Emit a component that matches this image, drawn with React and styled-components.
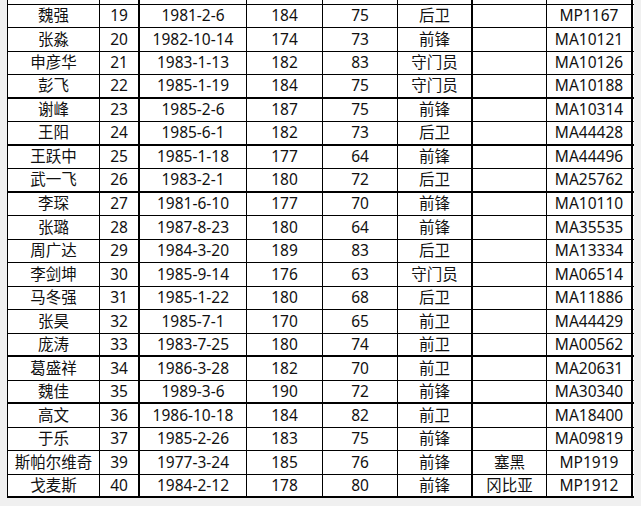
import React from "react";
import styled, { createGlobalStyle } from "styled-components";

const GlobalStyle = createGlobalStyle`
  html, body {
    margin: 0;
    padding: 0;
    background: #f0f0f0;
    overflow: hidden;
  }
`;

const COLS = [92, 40, 107, 76, 75, 75, 74, 86];
const THICK_COLS = [1, 5, 7];

const Viewport = styled.div`
  width: 641px;
  height: 506px;
  overflow: hidden;
  background: #f0f0f0;
`;

const Sheet = styled.div`
  margin: -19px 0 0 7px;
  width: 626px;
  border-left: 1px solid #000;
  background: #fff;
  font-family: "Noto Sans", "Noto Sans CJK SC", sans-serif;
  font-size: 15.5px;
  color: #111;
`;

const Row = styled.div`
  display: grid;
  grid-template-columns: ${COLS.map((w) => `${w}px`).join(" ")};
  height: ${(p) => p.$h}px;
  box-sizing: border-box;
  border-bottom: ${(p) => (p.$thick ? 2 : 1)}px solid #000;
`;

const Cell = styled.div`
  box-sizing: border-box;
  display: flex;
  align-items: center;
  justify-content: center;
  white-space: nowrap;
  border-right: ${(p) => (p.$thick ? 2 : 1)}px solid #000;
  line-height: 1;
`;

const rows = [
  ["孙祥", "", "", "", "", "", "", ""],
  ["魏强", "19", "1981-2-6", "184", "75", "后卫", "", "MP1167"],
  ["张淼", "20", "1982-10-14", "174", "73", "前锋", "", "MA10121"],
  ["申彦华", "21", "1983-1-13", "182", "83", "守门员", "", "MA10126"],
  ["彭飞", "22", "1985-1-19", "184", "75", "守门员", "", "MA10188"],
  ["谢峰", "23", "1985-2-6", "187", "75", "前锋", "", "MA10314"],
  ["王阳", "24", "1985-6-1", "182", "73", "后卫", "", "MA44428"],
  ["王跃中", "25", "1985-1-18", "177", "64", "前锋", "", "MA44496"],
  ["武一飞", "26", "1983-2-1", "180", "72", "后卫", "", "MA25762"],
  ["李琛", "27", "1981-6-10", "177", "70", "前锋", "", "MA10110"],
  ["张璐", "28", "1987-8-23", "180", "64", "前锋", "", "MA35535"],
  ["周广达", "29", "1984-3-20", "189", "83", "后卫", "", "MA13334"],
  ["李剑坤", "30", "1985-9-14", "176", "63", "守门员", "", "MA06514"],
  ["马冬强", "31", "1985-1-22", "180", "68", "后卫", "", "MA11886"],
  ["张昊", "32", "1985-7-1", "170", "65", "前卫", "", "MA44429"],
  ["庞涛", "33", "1983-7-25", "180", "74", "前卫", "", "MA00562"],
  ["葛盛祥", "34", "1986-3-28", "182", "70", "前卫", "", "MA20631"],
  ["魏佳", "35", "1989-3-6", "190", "72", "前锋", "", "MA30340"],
  ["高文", "36", "1986-10-18", "184", "82", "前卫", "", "MA18400"],
  ["于乐", "37", "1985-2-26", "183", "75", "前锋", "", "MA09819"],
  ["斯帕尔维奇", "39", "1977-3-24", "185", "76", "前锋", "塞黑", "MP1919"],
  ["戈麦斯", "40", "1984-2-12", "178", "80", "前锋", "冈比亚", "MP1912"],
];

const thickAfter = new Set(["22", "24", "26", "33", "35", "40"]);

export default function App() {
  return (
    <Viewport>
      <GlobalStyle />
      <Sheet>
        {rows.map((r, i) => (
          <Row key={i} $h={i % 2 === 0 ? 24 : 23} $thick={thickAfter.has(r[1])}>
            {r.map((v, j) => (
              <Cell key={j} $thick={THICK_COLS.includes(j)}>
                {v}
              </Cell>
            ))}
          </Row>
        ))}
      </Sheet>
    </Viewport>
  );
}
